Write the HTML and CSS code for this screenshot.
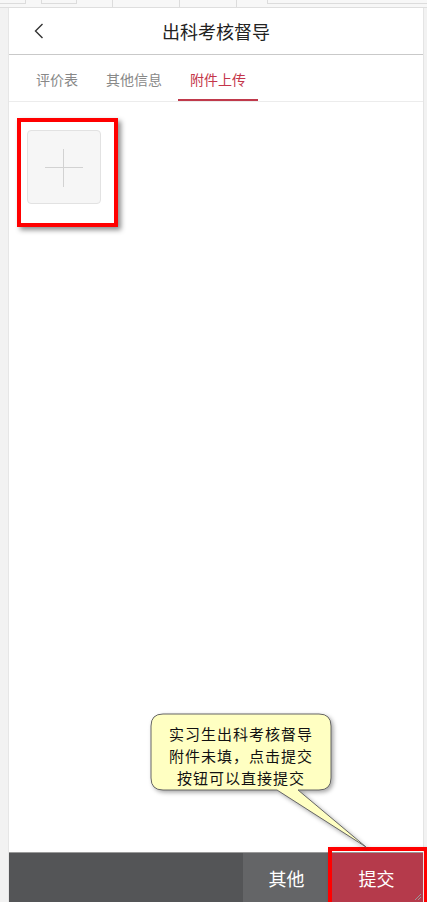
FILE: index.html
```html
<!DOCTYPE html>
<html lang="zh-CN">
<head>
    <meta charset="UTF-8">
    <meta name="viewport" content="width=device-width, initial-scale=1.0">
    <title>出科考核督导</title>
    <link rel="stylesheet" href="styles.css">
</head>
<body>

    <div class="topbar">
        <span class="tb tb-a"></span>
        <span class="tb tb-b"></span>
        <span class="tb tb-c"></span>
        <span class="tb tb-d"></span>
        <span class="tb tb-e"></span>
    </div>

    <div class="frame">
        <div class="gutter-left"></div>

        <div class="phone">
            <div class="header">
                <span class="back">
                    <svg width="10" height="16" viewBox="0 0 10 16"><path d="M8.5 1 L1.5 8 L8.5 15" fill="none" stroke="#333" stroke-width="1.4"/></svg>
                </span>
                <h1>出科考核督导</h1>
            </div>

            <div class="tabs">
                <div class="tab">评价表</div>
                <div class="tab">其他信息</div>
                <div class="tab active">附件上传</div>
            </div>

            <div class="content">
                <div class="upload">
                    <span class="plus-h"></span>
                    <span class="plus-v"></span>
                </div>
            </div>

            <div class="footer">
                <div class="footer-space"></div>
                <div class="btn btn-other">其他</div>
                <div class="btn btn-submit">
                    提交
                    <svg class="grip" width="9" height="9" viewBox="0 0 9 9"><path d="M8 2 L2 8 M8 5 L5 8" stroke="#999" stroke-width="1"/></svg>
                </div>
            </div>
        </div>

        <div class="gutter-right"></div>
    </div>

    <!-- annotations drawn over the page -->
    <div class="mark mark-upload"></div>
    <div class="mark mark-submit"></div>

    <svg class="callout" width="240" height="160" viewBox="0 0 240 160">
        <path d="M23 14 H179 Q191 14 191 26 V78 Q191 90 179 90 H158 L226 147 L137 90 H23 Q11 90 11 78 V26 Q11 14 23 14 Z" fill="#ffffc2" stroke="#666" stroke-width="1"/>
    </svg>
    <div class="callout-text">
        <div>实习生出科考核督导</div>
        <div>附件未填，点击提交</div>
        <div>按钮可以直接提交</div>
    </div>

</body>
</html>
```

FILE: styles.css
```css
body {
    margin: 0;
    padding: 0;
    font-family: "Noto Sans CJK SC", "Noto Sans", sans-serif;
    background-color: #f2f2f2;
    width: 427px;
    height: 902px;
    overflow: hidden;
    position: relative;
}

.topbar {
    height: 7px;
    background-color: #f7f7f7;
    border-bottom: 1px solid #dedede;
    position: relative;
}

.tb {
    position: absolute;
    top: 0;
    border-color: #dcdcdc;
    border-style: solid;
    border-width: 0;
}

.tb-a { left: 0; width: 25px; height: 3px; border-right-width: 1px; border-bottom-width: 1px; }
.tb-b { left: 41px; width: 34px; height: 3px; border-width: 0 1px 1px 1px; }
.tb-c { left: 112px; height: 7px; border-left-width: 1px; }
.tb-d { left: 179px; height: 7px; border-left-width: 1px; }
.tb-e { left: 236px; height: 7px; border-left-width: 1px; }
.tb-e::after {
    content: "";
    position: absolute;
    left: 30px;
    top: 0;
    width: 161px;
    height: 3px;
    border-left: 1px solid #dcdcdc;
    border-bottom: 1px solid #dcdcdc;
}

.frame {
    display: flex;
    height: 894px;
}

.gutter-left {
    width: 8px;
    border-right: 1px solid #e6e6e6;
    background-color: #f2f2f2;
}

.gutter-right {
    flex: 1;
    background-color: #f2f2f2;
    border-left: 1px solid #e4e4e4;
}

.phone {
    width: 414px;
    display: flex;
    flex-direction: column;
    background-color: #fff;
}

.header {
    height: 46px;
    border-bottom: 1px solid #c9c9c9;
    display: flex;
    align-items: center;
    justify-content: center;
    position: relative;
}

.header h1 {
    margin: 0;
    font-size: 18px;
    font-weight: 400;
    color: #222;
}

.back {
    position: absolute;
    left: 25px;
    top: 15px;
    display: flex;
}

.tabs {
    height: 46px;
    border-bottom: 1px solid #ececec;
    display: flex;
    gap: 4px;
    padding-left: 15px;
}

.tab {
    padding: 0 12px;
    font-size: 14px;
    color: #888;
    line-height: 48px;
    border-bottom: 2px solid transparent;
    height: 44px;
}

.tab.active {
    color: #c4364a;
    border-bottom-color: #c0394b;
}

.content {
    flex: 1;
    padding: 28px 0 0 18px;
}

.upload {
    width: 72px;
    height: 72px;
    border: 1px solid #e2e2e2;
    border-radius: 4px;
    background-color: #f6f6f6;
    position: relative;
}

.plus-h {
    position: absolute;
    left: 17px;
    top: 36px;
    width: 38px;
    height: 1px;
    background-color: #d2d2d2;
}

.plus-v {
    position: absolute;
    left: 35px;
    top: 18px;
    width: 1px;
    height: 38px;
    background-color: #d2d2d2;
}

.footer {
    height: 49px;
    border-top: 1px solid #9a9a9a;
    display: flex;
    background-color: #545557;
}

.footer-space {
    flex: 1;
}

.btn {
    font-size: 18px;
    color: #fff;
    display: flex;
    align-items: center;
    justify-content: center;
    position: relative;
}

.btn-other {
    width: 87px;
    background-color: #646567;
}

.btn-submit {
    width: 93px;
    background-color: #b53a4b;
}

.grip {
    position: absolute;
    right: 1px;
    bottom: 1px;
}

.mark {
    position: absolute;
    border: 4px solid #ff0000;
    box-shadow: 3px 3px 5px rgba(0, 0, 0, 0.45);
}

.mark-upload {
    left: 17px;
    top: 118px;
    width: 93px;
    height: 101px;
}

.mark-submit {
    left: 328px;
    top: 847px;
    width: 92px;
    height: 60px;
}

.callout {
    position: absolute;
    left: 140px;
    top: 700px;
    filter: drop-shadow(2px 2px 2px rgba(0, 0, 0, 0.35));
}

.callout-text {
    position: absolute;
    left: 151px;
    top: 714px;
    width: 180px;
    padding-top: 9px;
    display: flex;
    flex-direction: column;
    align-items: center;
    font-size: 15px;
    letter-spacing: 1px;
    line-height: 22px;
    color: #111;
}
```
